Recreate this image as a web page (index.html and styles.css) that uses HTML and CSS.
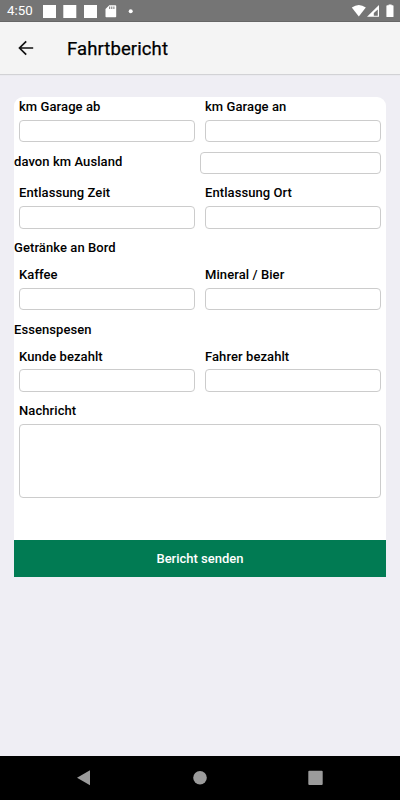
FILE: index.html
```html
<!DOCTYPE html>
<html lang="de">
<head>
<meta charset="utf-8">
<title>Fahrtbericht</title>
<link rel="stylesheet" href="styles.css">
</head>
<body>
<div class="status">
  <span class="time">4:50</span>
  <svg class="left-icons" width="95" height="22" viewBox="0 0 95 22" fill="#fff">
    <path d="M3 5h13v13H3zM23.300 5h13v13h-13zM44 5h13v13H44z"/>
    <path fill-rule="evenodd" d="M69.300 5.300h6.200q.7 0 .7.700v10.600q0 .7-.7.700h-9.300q-.7 0-.7-.7V9zM69.200 6.500v2.500h1V6.500zM71.300 6.500v2.500h1V6.500zM73.400 6.500v2.500h1V6.500z"/>
    <circle cx="90.700" cy="11.300" r="2"/>
  </svg>
  <svg class="right-icons" width="50" height="22" viewBox="0 0 50 22" fill="#fff">
    <path d="M1.800 7.400Q8.800 2.400 15.800 7.400L8.800 16.500z"/>
    <path fill-rule="evenodd" d="M29 5v11.800H17zM27.800 9.500l-4 3.500v2.800h4z"/>
    <path d="M37.300 5.300h1.300V4.500h3v.8h1.300q.6 0 .6.600v10.500q0 .6-.6.600h-5.900q-.6 0-.6-.6V5.900q0-.6.900-.6z"/>
  </svg>
</div>
<header class="bar">
  <svg class="back" width="16" height="16" viewBox="0 0 16 16" fill="none" stroke="#111" stroke-width="1.700"><path d="M15.200 8H1.800M8.200 1.300L1.500 8l6.700 6.700"/></svg>
  <h1>Fahrtbericht</h1>
</header>
<main>
  <form class="card">
    <div class="row">
      <label>km Garage ab<input type="text"></label>
      <label>km Garage an<input type="text"></label>
    </div>
    <div class="inline">
      <span>davon km Ausland</span>
      <input type="text">
    </div>
    <div class="row">
      <label>Entlassung Zeit<input type="text"></label>
      <label>Entlassung Ort<input type="text"></label>
    </div>
    <h2>Getränke an Bord</h2>
    <div class="row">
      <label>Kaffee<input type="text"></label>
      <label>Mineral / Bier<input type="text"></label>
    </div>
    <h2>Essenspesen</h2>
    <div class="row">
      <label>Kunde bezahlt<input type="text"></label>
      <label>Fahrer bezahlt<input type="text"></label>
    </div>
    <div class="row">
      <label>Nachricht<textarea></textarea></label>
    </div>
    <button type="button">Bericht senden</button>
  </form>
</main>
<nav class="nav">
  <svg width="400" height="44" viewBox="0 0 400 44" fill="#9b9b9b">
    <path d="M77 21.800L90 14.300v15z"/>
    <circle cx="200" cy="21.800" r="6.800"/>
    <rect x="308.300" y="14.700" width="14.400" height="14.400" rx="1"/>
  </svg>
</nav>
</body>
</html>
```
FILE: styles.css
```css
* { box-sizing: border-box; }
body {
  margin: 0;
  height: 800px;
  display: flex;
  flex-direction: column;
  background: #efeef4;
  font-family: Roboto, "Liberation Sans", sans-serif;
  color: #000;
  overflow: hidden;
}
.status {
  height: 22px;
  flex: none;
  display: flex;
  align-items: center;
  padding-left: 7px;
  background: #757575;
  border-bottom: 1px solid #666;
  color: #fff;
}
.time { width: 33px; font-size: 13.300px; line-height: 22px; padding-top: 1px; }
.right-icons { margin-left: auto; }
.bar {
  height: 52px;
  flex: none;
  display: flex;
  align-items: center;
  padding-left: 18px;
  background: #f4f4f4;
  box-shadow: 0 1px 1px #d2d2d5;
}
.back { margin-right: 33px; }
h1 {
  margin: 1px 0 0;
  font-size: 18.500px;
  font-weight: 400;
  line-height: 24px;
  letter-spacing: .1px;
  -webkit-text-stroke: .25px #000;
}
main { flex: 1; padding: 23px 14px 0; }
.card {
  display: flex;
  flex-direction: column;
  height: 479.500px;
  background: #fff;
  border-radius: 9px 9px 0 0;
  font-size: 13px;
  font-weight: 500;
  letter-spacing: .08px;
}
.row { display: flex; gap: 10px; padding: 0 5px; margin-bottom: 9.300px; }
label { flex: 1; line-height: 20px; }
input, textarea {
  display: block;
  width: 100%;
  height: 22.700px;
  margin: 2.700px 0 0;
  padding: 0 4px;
  border: 1px solid #ccc;
  border-radius: 4px;
  background: #fff;
  resize: none;
  outline: none;
}
textarea { height: 74.300px; }
.inline { display: flex; margin-bottom: 9.120px; padding-right: 5px; }
.inline span { width: 186px; line-height: 19px; }
.inline input { flex: 1; margin: 0; }
h2 { margin: 0 0 6.900px; font: inherit; line-height: 20px; }
button {
  margin-top: auto;
  height: 36.500px;
  padding: 0;
  border: 0;
  background: #017b53;
  color: #fff;
  font: 500 13px/37px Roboto, "Liberation Sans", sans-serif;
}
.nav { height: 44px; flex: none; background: #000; }
.nav svg { display: block; }
```
